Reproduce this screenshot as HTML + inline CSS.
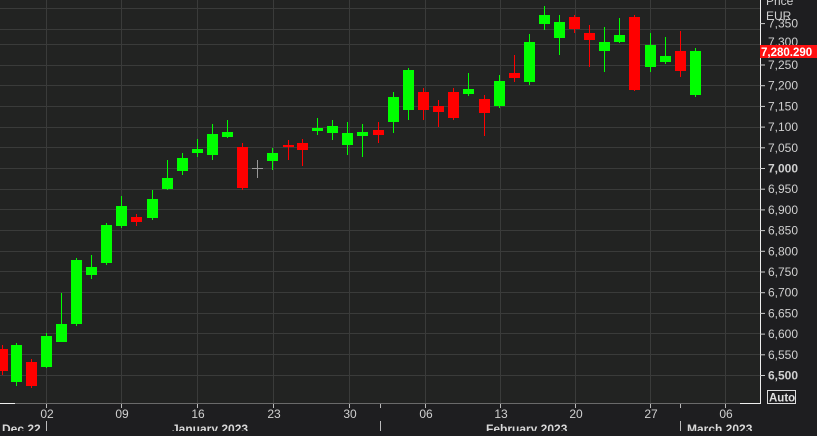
<!DOCTYPE html><html><head><style>
body{margin:0;background:#1e1e20;width:817px;height:431px;overflow:hidden;font-family:"Liberation Sans",sans-serif}
</style></head><body>
<svg width="817" height="431" xmlns="http://www.w3.org/2000/svg" font-family="Liberation Sans, sans-serif">
<rect x="0" y="0" width="817" height="431" fill="#1e1e20"/>
<rect x="0" y="0" width="760" height="403" fill="#222322"/>
<g stroke="#3a3b3a" stroke-width="1">
<line x1="0" y1="8.5" x2="760" y2="8.5"/><line x1="0" y1="29.5" x2="760" y2="29.5"/><line x1="0" y1="44.5" x2="760" y2="44.5"/><line x1="0" y1="65.5" x2="760" y2="65.5"/><line x1="0" y1="85.5" x2="760" y2="85.5"/><line x1="0" y1="106.5" x2="760" y2="106.5"/><line x1="0" y1="127.5" x2="760" y2="127.5"/><line x1="0" y1="147.5" x2="760" y2="147.5"/><line x1="0" y1="168.5" x2="760" y2="168.5"/><line x1="0" y1="189.5" x2="760" y2="189.5"/><line x1="0" y1="209.5" x2="760" y2="209.5"/><line x1="0" y1="230.5" x2="760" y2="230.5"/><line x1="0" y1="251.5" x2="760" y2="251.5"/><line x1="0" y1="271.5" x2="760" y2="271.5"/><line x1="0" y1="292.5" x2="760" y2="292.5"/><line x1="0" y1="313.5" x2="760" y2="313.5"/><line x1="0" y1="333.5" x2="760" y2="333.5"/><line x1="0" y1="354.5" x2="760" y2="354.5"/><line x1="0" y1="375.5" x2="760" y2="375.5"/>
<line x1="46.5" y1="0" x2="46.5" y2="403"/><line x1="121.5" y1="0" x2="121.5" y2="403"/><line x1="197.5" y1="0" x2="197.5" y2="403"/><line x1="273.5" y1="0" x2="273.5" y2="403"/><line x1="349.5" y1="0" x2="349.5" y2="403"/><line x1="425.5" y1="0" x2="425.5" y2="403"/><line x1="500.5" y1="0" x2="500.5" y2="403"/><line x1="575.5" y1="0" x2="575.5" y2="403"/><line x1="650.5" y1="0" x2="650.5" y2="403"/><line x1="725.5" y1="0" x2="725.5" y2="403"/>
</g>
<g id="c"></g>
<line x1="0" y1="403.5" x2="760" y2="403.5" stroke="#6a6a6a"/>
<line x1="0" y1="403.5" x2="15" y2="403.5" stroke="#eee"/>
<line x1="740" y1="403.5" x2="760" y2="403.5" stroke="#eee"/>
<line x1="760.5" y1="0" x2="760.5" y2="404" stroke="#eee"/>
<g stroke="#bbb"><line x1="46.5" y1="404" x2="46.5" y2="408"/><line x1="121.5" y1="404" x2="121.5" y2="408"/><line x1="197.5" y1="404" x2="197.5" y2="408"/><line x1="273.5" y1="404" x2="273.5" y2="408"/><line x1="349.5" y1="404" x2="349.5" y2="408"/><line x1="425.5" y1="404" x2="425.5" y2="408"/><line x1="500.5" y1="404" x2="500.5" y2="408"/><line x1="575.5" y1="404" x2="575.5" y2="408"/><line x1="650.5" y1="404" x2="650.5" y2="408"/><line x1="725.5" y1="404" x2="725.5" y2="408"/>
<line x1="46.5" y1="421" x2="46.5" y2="431"/><line x1="380.5" y1="404" x2="380.5" y2="408"/><line x1="380.5" y1="421" x2="380.5" y2="431"/><line x1="680.5" y1="404" x2="680.5" y2="408"/><line x1="680.5" y1="421" x2="680.5" y2="431"/></g>
<g fill="#d0d0d0" font-size="12" text-anchor="middle">
<text x="47" y="418">02</text><text x="122" y="418">09</text><text x="198" y="418">16</text><text x="274" y="418">23</text><text x="350" y="418">30</text><text x="426" y="418">06</text><text x="501" y="418">13</text><text x="576" y="418">20</text><text x="651" y="418">27</text><text x="726" y="418">06</text>
</g>
<g fill="#d8d8d8" font-size="12" font-weight="bold">
<text x="2" y="433">Dec 22</text><text x="172" y="433">January 2023</text><text x="486" y="433">February 2023</text><text x="687" y="433">March 2023</text>
</g>
<g fill="#d0d0d0" font-size="12">
<text x="766" y="5">Price</text><text x="766" y="20">EUR</text>
</g>
<g id="yl" fill="#d0d0d0" font-size="12"></g>
<rect x="760" y="45" width="57" height="13" fill="#ff1010"/>
<text x="761" y="56" fill="#fff" font-size="11.5" font-weight="bold">7,280.290</text>
<rect x="767.5" y="390.5" width="28" height="13" fill="none" stroke="#ddd"/>
<text x="769" y="401.5" fill="#e0e0e0" font-size="11.5" font-weight="bold">Auto</text>
</svg>
<script>
var d=[[2,'r',349,371,345,375],[16,'g',345,382,343,386],[31,'r',362,386,359,388],[46,'g',336,367,333,368],[61,'g',324,342,293,342],[76,'g',260,324,258,326],[91,'g',267,275,255,279],[106,'g',225,263,223,265],[121,'g',206,226,196,228],[136,'r',217,222,214,226],[152,'g',199,218,190,220],[167,'g',178,189,160,190],[182,'g',158,171,153,175],[197,'g',149,153,139,157],[212,'g',134,155,124,160],[227,'g',132,137,120,138],[242,'r',147,188,143,190],[257,'d',168,169,160,178],[272,'g',153,161,148,170],[288,'r',145,147,140,160],[302,'r',143,150,139,166],[317,'g',128,131,118,135],[332,'g',126,133,120,140],[347,'g',133,145,122,155],[362,'g',132,136,124,157],[378,'r',130,135,122,143],[393,'g',97,122,92,133],[408,'g',70,110,68,120],[423,'r',92,110,88,120],[438,'r',106,112,100,127],[453,'r',92,118,88,120],[468,'g',89,94,73,96],[484,'r',99,113,95,136],[499,'g',81,106,75,108],[514,'r',73,78,55,82],[529,'g',42,82,34,85],[544,'g',15,24,6,30],[559,'g',22,38,15,55],[574,'r',17,29,15,33],[589,'r',33,40,25,67],[604,'g',42,51,27,72],[619,'g',35,42,18,43],[634,'r',17,90,15,91],[650,'g',45,67,33,72],[665,'g',56,62,37,64],[680,'r',51,71,31,77],[695,'g',51,95,48,97]];
var s='';d.forEach(function(c){var col=c[1]=='g'?'#00ff00':c[1]=='r'?'#ff0000':'#999';s+='<line x1="'+(c[0]+.5)+'" y1="'+c[4]+'" x2="'+(c[0]+.5)+'" y2="'+c[5]+'" stroke="'+col+'"/><rect x="'+(c[0]-5)+'" y="'+c[2]+'" width="11" height="'+Math.max(1,c[3]-c[2])+'" fill="'+col+'"/>';});
document.getElementById('c').innerHTML=s;
var y='';for(var p=7350;p>=6500;p-=50){var yy=168-(p-7000)*0.414;if(p==7300)continue;var t=(p/1000|0)+','+('00'+p%1000).slice(-3);y+='<line x1="760" y1="'+(yy+.5)+'" x2="765" y2="'+(yy+.5)+'" stroke="#ccc"/><text x="768" y="'+(yy+4.5)+'"'+(p%500==0?' font-weight="bold"':'')+'>'+t+'</text>';}
y+='<text x="768" y="46">7,300</text>';
document.getElementById('yl').innerHTML=y;
</script>
</body></html>
